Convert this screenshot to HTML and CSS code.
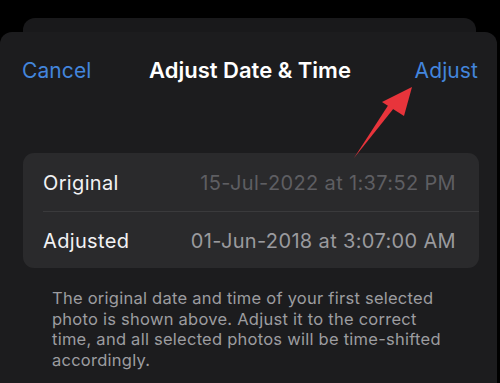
FILE: index.html
```html
<!DOCTYPE html>
<html>
<head>
<meta charset="utf-8">
<link rel="stylesheet" href="styles.css">
</head>
<body>
<div class="back-card"></div>
<div class="sheet">
  <div class="nav">
    <span class="nav-btn cancel">Cancel</span>
    <span class="title">Adjust Date &amp; Time</span>
    <span class="nav-btn adjust">Adjust</span>
  </div>
  <div class="card">
    <div class="row first">
      <span class="label">Original</span>
      <span class="value dim">15-Jul-2022 at 1:37:52 PM</span>
    </div>
    <div class="row">
      <span class="label">Adjusted</span>
      <span class="value">01-Jun-2018 at 3:07:00 AM</span>
    </div>
  </div>
  <p class="note">The original date and time of your first selected photo is shown above. Adjust it to the correct time, and all selected photos will be time-shifted accordingly.</p>
  <svg class="arrow" width="500" height="383" viewBox="0 0 500 383">
    <path d="M354 158 L389 104 L394 108 Z" fill="#e8343b"/>
    <path d="M412 87 L382 102 L404 116 Z" fill="#e8343b"/>
  </svg>
</div>
</body>
</html>
```
FILE: styles.css
```css
html, body {
  margin: 0;
  padding: 0;
  background: #000;
  width: 500px;
  height: 383px;
  overflow: hidden;
  font-family: Inter, "Liberation Sans", sans-serif;
}

.back-card {
  margin: 18px 24px 0 23px;
  height: 14px;
  background: #19191b;
  border-radius: 12px 12px 0 0;
}

.sheet {
  margin-right: 3px;
  height: 360px;
  background: #1c1c1e;
  border-radius: 12px 12px 0 0;
}

.nav {
  display: grid;
  grid-template-columns: 1fr auto 1fr;
  align-items: center;
  height: 76px;
  padding: 0 19px 0 22px;
}

.nav-btn {
  font-size: 21px;
  color: #4385dc;
  letter-spacing: 0.1px;
}

.adjust {
  justify-self: end;
}

.title {
  font-size: 22px;
  font-weight: 600;
  color: #fff;
  letter-spacing: 0px;
}

.card {
  margin: 45px 18px 0 23px;
  background: #2a2a2c;
  border-radius: 11px;
  padding-left: 20px;
}

.row {
  display: flex;
  justify-content: space-between;
  align-items: center;
  height: 57px;
  padding-top: 2px;
  box-sizing: border-box;
  padding-right: 23px;
  font-size: 20px;
  letter-spacing: 0.35px;
}

.row.first {
  height: 58px;
}

.row + .row {
  border-top: 1px solid #3a3a3c;
}

.label {
  color: #f2f2f4;
}

.value {
  color: #9a9a9e;
}

.value.dim {
  color: #5e5e62;
}

.note {
  width: 390px;
  margin: 20px 0 0 52px;
  font-size: 16.5px;
  line-height: 20.5px;
  letter-spacing: 0.25px;
  color: #9c9ca0;
}

.arrow {
  position: absolute;
  left: 0;
  top: 0;
  pointer-events: none;
}
```
